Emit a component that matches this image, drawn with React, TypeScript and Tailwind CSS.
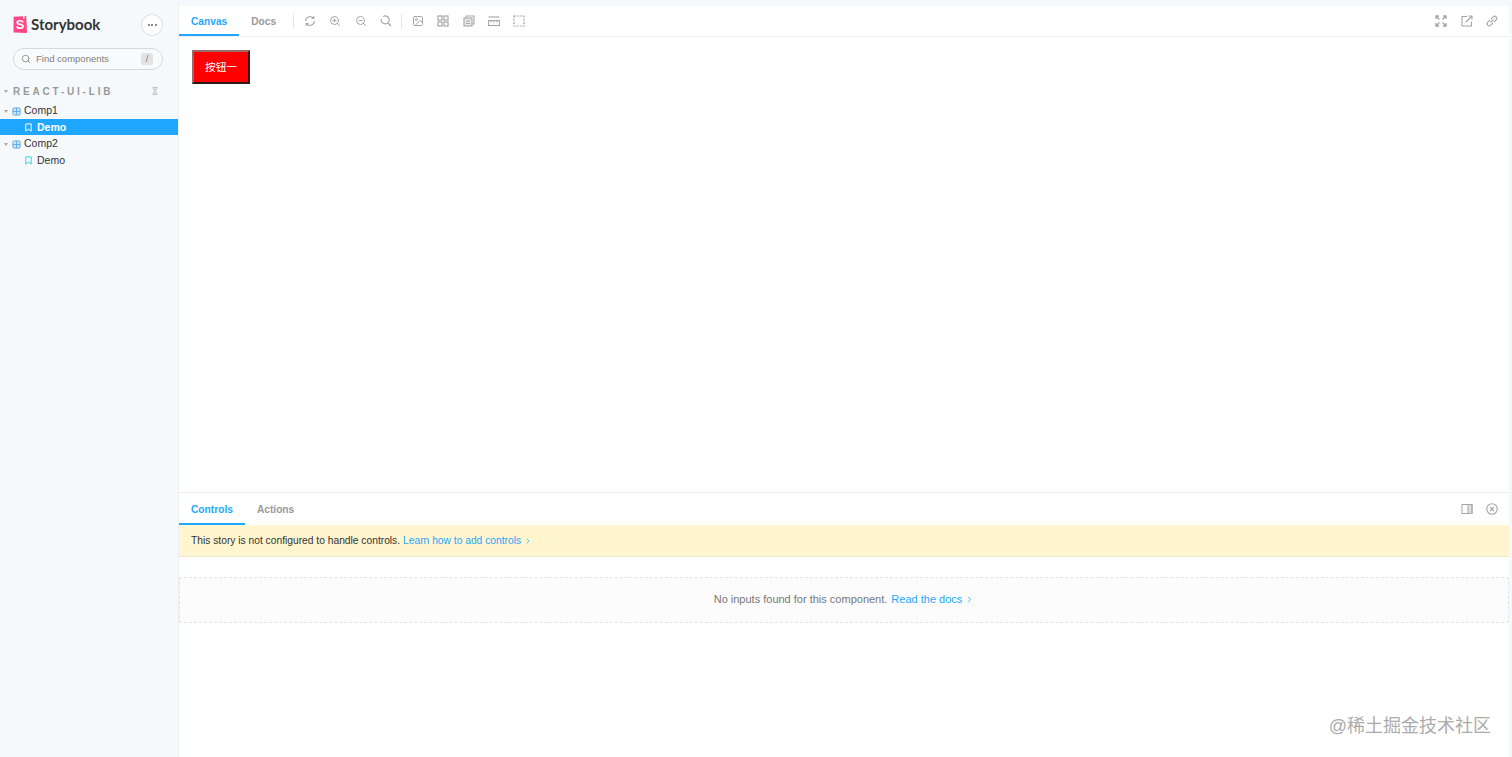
import { ChevronRight, Image, Search, ZoomIn, ZoomOut } from 'lucide-react'

const ICON = 'w-[12px] h-[12px] text-[#a6a6a6]'

function Sync() {
  return (
    <svg viewBox="0 0 12 12" className={ICON} fill="none" stroke="currentColor" strokeWidth="1.1">
      <path d="M1.6 6a4.4 4.4 0 0 1 7.6-3" />
      <path d="M10.4 6a4.4 4.4 0 0 1-7.6 3" />
      <path d="M9.8 1v2.4H7.4M2.2 11V8.6h2.4" />
    </svg>
  )
}

function ZoomReset() {
  return (
    <svg viewBox="0 0 12 12" className={ICON} fill="none" stroke="currentColor" strokeWidth="1.1">
      <path d="M3 1.6a4 4 0 1 1-1.6 2.2" />
      <path d="M8.2 8.2L11 11" strokeWidth="1.4" />
    </svg>
  )
}

function Grid2() {
  return (
    <svg viewBox="0 0 12 12" className={ICON} fill="none" stroke="currentColor" strokeWidth="1.2">
      <rect x="1" y="1" width="4" height="4" />
      <rect x="7" y="1" width="4" height="4" />
      <rect x="1" y="7" width="4" height="4" />
      <rect x="7" y="7" width="4" height="4" />
    </svg>
  )
}

function Outline() {
  return (
    <svg viewBox="0 0 12 12" className={ICON} fill="none" stroke="currentColor" strokeWidth="1.2" strokeDasharray="2 1.2">
      <rect x="1" y="1" width="10" height="10" />
    </svg>
  )
}

function Ruler() {
  return (
    <svg viewBox="0 0 12 12" className={ICON} fill="none" stroke="currentColor" strokeWidth="1.1">
      <path d="M0.5 2h11" />
      <rect x="0.5" y="5.5" width="11" height="5" />
      <path d="M3 5.5v2M6 5.5v2M9 5.5v2" />
    </svg>
  )
}

function Cards() {
  return (
    <svg viewBox="0 0 12 12" className={ICON} fill="none" stroke="currentColor" strokeWidth="1.1">
      <path d="M3 3V1h8v8H9" />
      <rect x="1" y="3" width="8" height="8" fill="currentColor" fillOpacity="0.25" />
      <path d="M3 6h4M3 8.5h4" />
    </svg>
  )
}

function Expand() {
  return (
    <svg viewBox="0 0 12 12" className={ICON} fill="none" stroke="currentColor" strokeWidth="1.3">
      <path d="M1 4V1h3M8 1h3v3M11 8v3H8M4 11H1V8M1.5 1.5l3 3M10.5 1.5l-3 3M10.5 10.5l-3-3M1.5 10.5l3-3" />
    </svg>
  )
}

function OpenNew() {
  return (
    <svg viewBox="0 0 12 12" className={ICON} fill="none" stroke="currentColor" strokeWidth="1.1">
      <path d="M6 1.5H1v9.5h9.5V6.5" />
      <path d="M5 7l6-6M7.5 1h3.5v3.5" />
    </svg>
  )
}

function LinkIcon() {
  return (
    <svg viewBox="0 0 12 12" className={ICON} fill="none" stroke="currentColor" strokeWidth="1.1">
      <path d="M4.5 7.5l3-3" />
      <path d="M4 5L1.8 7.2a2 2 0 0 0 3 3L7 8" />
      <path d="M8 7l2.2-2.2a2 2 0 0 0-3-3L5 4" />
    </svg>
  )
}

function PanelRight() {
  return (
    <svg viewBox="0 0 12 12" className={ICON} fill="none" stroke="currentColor" strokeWidth="1">
      <rect x="1" y="1.5" width="10" height="9" />
      <rect x="7" y="1.5" width="4" height="9" fill="currentColor" fillOpacity="0.3" />
    </svg>
  )
}

function CloseCircle() {
  return (
    <svg viewBox="0 0 12 12" className={ICON} fill="none" stroke="currentColor" strokeWidth="1.1">
      <circle cx="6" cy="6" r="5.3" />
      <path d="M4 4l4 4M8 4l-4 4" />
    </svg>
  )
}

function Caret() {
  return <span className="w-0 h-0 border-x-[2.5px] border-x-transparent border-t-[3px] border-t-[#a8a8a8]" />
}

function ComponentIcon() {
  return (
    <svg viewBox="0 0 10 10" className="w-[9px] h-[9px] text-[#5aa9e6]" fill="none" stroke="currentColor" strokeWidth="1">
      <rect x="1" y="1" width="8" height="8" rx="1" fill="currentColor" fillOpacity="0.25" />
      <path d="M5 1v8M1 5h8" />
    </svg>
  )
}

function Bookmark({ active }: { active?: boolean }) {
  return (
    <svg viewBox="0 0 10 10" className={`w-[9px] h-[9px] ${active ? 'text-white' : 'text-[#37d5d3]'}`} fill="none" stroke="currentColor" strokeWidth="1.1">
      <path d="M2 1h6v8L5 6.8 2 9z" />
    </svg>
  )
}

function Tree() {
  return (
    <div className="mt-[5px] text-[10.5px] text-[#333333]">
      <div className="h-[17px] pt-[1px] flex items-center">
        <span className="w-[12px] pl-[4px] flex"><Caret /></span>
        <ComponentIcon />
        <span className="ml-[3px]">Comp1</span>
      </div>
      <div className="h-[16px] pt-[1px] flex items-center bg-[#1ea7fd] text-white font-bold pl-[24px]">
        <Bookmark active />
        <span className="ml-[4px]">Demo</span>
      </div>
      <div className="h-[17px] pt-[1px] flex items-center">
        <span className="w-[12px] pl-[4px] flex"><Caret /></span>
        <ComponentIcon />
        <span className="ml-[3px]">Comp2</span>
      </div>
      <div className="h-[16px] pt-[1px] flex items-center pl-[24px]">
        <Bookmark />
        <span className="ml-[4px]">Demo</span>
      </div>
    </div>
  )
}

function Logo() {
  return (
    <svg viewBox="0 0 14 17" className="w-[14px] h-[17px]">
      <path d="M0.6 0.8L10 0.2V3l1.6-0.6V0.1L13.2 0 14 16.3a0.7 0.7 0 0 1-0.7 0.7L1.2 16.6a0.7 0.7 0 0 1-0.7-0.6z" fill="#ff4785" />
      <text x="7" y="13.4" textAnchor="middle" fontSize="13" fontWeight="700" fill="#ffffff">S</text>
    </svg>
  )
}

function Sidebar() {
  return (
    <aside className="w-[179px] shrink-0 bg-[#f6f9fc] border-r border-[#eef1f4]">
      <div className="h-[25px] mt-[12px] pl-[13px] pr-[15px] flex items-center justify-between">
        <div className="flex items-center">
          <Logo />
          <span className="ml-[4px] text-[15px] font-bold text-[#333333] font-['Lato',sans-serif]">Storybook</span>
        </div>
        <div className="w-[22px] h-[22px] rounded-full bg-white border border-[#d9dfe4] flex items-center justify-center gap-[1.5px]">
          <span className="w-[2px] h-[2px] rounded-full bg-[#666666]" />
          <span className="w-[2px] h-[2px] rounded-full bg-[#666666]" />
          <span className="w-[2px] h-[2px] rounded-full bg-[#666666]" />
        </div>
      </div>
      <div className="mt-[11px] ml-[13px] mr-[15px] h-[22px] rounded-full border border-[#d5dadf] bg-[#f8fafc] flex items-center pl-[7px] pr-[9px]">
        <Search className="w-[10px] h-[10px] text-[#888888]" strokeWidth={2} />
        <span className="ml-[5px] text-[9.5px] text-[#808080]">Find components</span>
        <span className="ml-auto w-[12px] h-[12px] rounded-[2px] bg-[#e3e3e3] text-[9px] leading-[12px] text-center text-[#777777]">/</span>
      </div>
      <div className="mt-[15px] h-[12px] pl-[4px] pr-[19px] flex items-center">
        <Caret />
        <span className="ml-[5px] text-[10px] font-bold tracking-[2.8px] text-[#999999]">REACT-UI-LIB</span>
        <svg viewBox="0 0 10 10" className="ml-auto w-[8px] h-[8px] text-[#999999]" fill="none" stroke="currentColor" strokeWidth="1.1">
          <path d="M2 1h6M3 2.5l2 2 2-2M3 7.5l2-2 2 2M2 9h6" />
        </svg>
      </div>
      <Tree />
    </aside>
  )
}

function Tab({ label, active }: { label: string; active?: boolean }) {
  return (
    <div className={`h-full px-[12px] pt-[2px] flex items-center text-[10.2px] font-bold border-y-2 border-t-transparent ${active ? 'text-[#1ea7fd] border-b-[#1ea7fd]' : 'text-[#999999] border-b-transparent'}`}>
      {label}
    </div>
  )
}

function Toolbar() {
  return (
    <div className="h-[31px] shrink-0 flex items-center border-b border-[#eceef0]">
      <Tab label="Canvas" active />
      <Tab label="Docs" />
      <div className="ml-[5px] w-px h-[15px] bg-[#e6e6e6]" />
      <div className="ml-[10px] flex items-center gap-[13.3px]">
        <Sync />
        <ZoomIn className={ICON} strokeWidth={2} />
        <ZoomOut className={ICON} strokeWidth={2} />
        <ZoomReset />
      </div>
      <div className="ml-[9px] w-px h-[15px] bg-[#e6e6e6]" />
      <div className="ml-[10px] flex items-center gap-[13.3px]">
        <Image className={ICON} strokeWidth={2} />
        <Grid2 />
        <Cards />
        <Ruler />
        <Outline />
      </div>
      <div className="ml-auto pr-[11px] flex items-center gap-[13.5px]">
        <Expand />
        <OpenNew />
        <LinkIcon />
      </div>
    </div>
  )
}

function Addons() {
  return (
    <div className="flex-1 flex flex-col min-h-0 border-t border-[#e8eaec]">
      <div className="h-[32px] shrink-0 flex items-center">
        <Tab label="Controls" active />
        <Tab label="Actions" />
        <div className="ml-auto pr-[11px] flex items-center gap-[13.5px]">
          <PanelRight />
          <CloseCircle />
        </div>
      </div>
      <div className="h-[32px] shrink-0 bg-[#fff5cf] border-b border-[#ece8d3] pl-[12px] flex items-center text-[10.25px] text-[#333333]">
        This story is not configured to handle controls.
        <span className="ml-[3px] text-[#1ea7fd]">Learn how to add controls</span>
        <ChevronRight className="ml-[3px] w-[8px] h-[8px] text-[#1ea7fd]" strokeWidth={2} />
      </div>
      <div className="mt-[20px] h-[46px] pb-[2px] shrink-0 bg-[#fcfcfc] border border-dashed border-[#e3e5e7] flex items-center justify-center text-[11px] text-[#777777]">
        No inputs found for this component.
        <span className="ml-[4px] text-[#1ea7fd]">Read the docs</span>
        <ChevronRight className="ml-[3px] w-[9px] h-[9px] text-[#1ea7fd]" strokeWidth={2} />
      </div>
    </div>
  )
}

export default function App() {
  return (
    <div className="relative h-screen flex overflow-hidden bg-[#f6f9fc] font-['Liberation_Sans','Noto_Sans_CJK_SC',sans-serif]">
      <Sidebar />
      <main className="flex-1 min-w-0 flex flex-col pt-[6px] pr-[3px]">
        <div className="flex-1 flex flex-col bg-white min-h-0">
          <Toolbar />
          <div className="h-[455px] shrink-0 pt-[13px] pl-[13px]">
            <button className="w-[58px] h-[34px] pt-[1px] bg-[#ff0000] text-white text-[10.7px] border-2 border-t-[#9a6a6a] border-l-[#9a6a6a] border-r-[#2a1a1a] border-b-[#2a1a1a]">
              按钮一
            </button>
          </div>
          <Addons />
        </div>
      </main>
      <span className="absolute right-[21px] top-[714px] text-[18px] leading-[24px] text-[#ababab]">@稀土掘金技术社区</span>
    </div>
  )
}
